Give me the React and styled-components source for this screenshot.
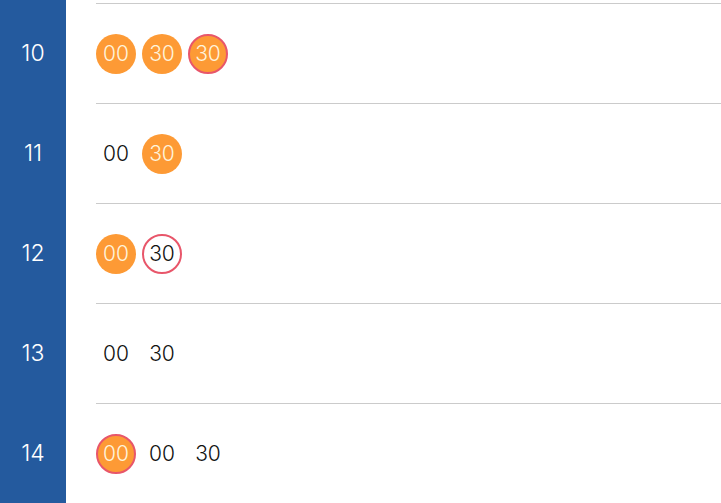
import styled, { createGlobalStyle, css } from "styled-components"

const GlobalStyle = createGlobalStyle`
  html, body {
    margin: 0;
    padding: 0;
    background: #ffffff;
    overflow: hidden;
  }
  body {
    font-family: Inter, "Noto Sans", "Liberation Sans", sans-serif;
  }
`

const Page = styled.div`
  display: flex;
  width: 721px;
  height: 503px;
  overflow: hidden;
`

const Sidebar = styled.div`
  width: 66px;
  flex-shrink: 0;
  background: #245a9e;
  padding-top: 3px;
  display: flex;
  flex-direction: column;
`

const HourLabel = styled.div`
  height: 100px;
  display: flex;
  align-items: center;
  justify-content: center;
  color: #ffffff;
  font-size: 23px;
  font-weight: 300;
  flex-shrink: 0;
`

const Content = styled.div`
  flex: 1;
  padding-top: 3px;
  padding-left: 30px;
  display: flex;
  flex-direction: column;
`

const Row = styled.div`
  height: 100px;
  box-sizing: border-box;
  border-top: 1px solid #cbcbcb;
  display: flex;
  align-items: center;
  gap: 6px;
  flex-shrink: 0;
`

const Slot = styled.div`
  width: 40px;
  height: 40px;
  box-sizing: border-box;
  border-radius: 50%;
  display: flex;
  align-items: center;
  justify-content: center;
  font-size: 21px;
  font-weight: 300;
  color: #111111;
  ${(p) =>
    p.filled &&
    css`
      background: #fd9a35;
      color: #fff4dc;
    `}
  ${(p) =>
    p.ringed &&
    css`
      border: 2px solid #e8566a;
    `}
`

const rows = [
  { hour: 10, slots: [{ t: "00", f: 1 }, { t: "30", f: 1 }, { t: "30", f: 1, r: 1 }] },
  { hour: 11, slots: [{ t: "00" }, { t: "30", f: 1 }] },
  { hour: 12, slots: [{ t: "00", f: 1 }, { t: "30", r: 1 }] },
  { hour: 13, slots: [{ t: "00" }, { t: "30" }] },
  { hour: 14, slots: [{ t: "00", f: 1, r: 1 }, { t: "00" }, { t: "30" }] },
]

export default function App() {
  return (
    <>
      <GlobalStyle />
      <Page>
        <Sidebar>
          {rows.map((r) => (
            <HourLabel key={r.hour}>{r.hour}</HourLabel>
          ))}
        </Sidebar>
        <Content>
          {rows.map((r) => (
            <Row key={r.hour}>
              {r.slots.map((s, i) => (
                <Slot key={i} filled={s.f} ringed={s.r}>
                  {s.t}
                </Slot>
              ))}
            </Row>
          ))}
        </Content>
      </Page>
    </>
  )
}
